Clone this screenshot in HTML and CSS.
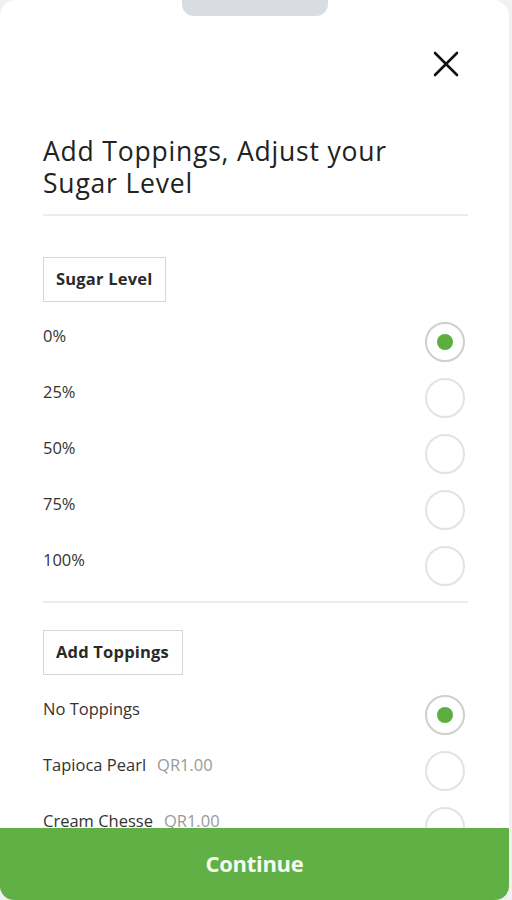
FILE: index.html
```html
<!DOCTYPE html>
<html>
<head>
<meta charset="utf-8">
<link rel="stylesheet" href="styles.css">
</head>
<body>
<div class="sheet">
  <div class="handle"></div>
  <div class="content">
    <div class="close-row">
      <svg class="close" width="26" height="26" viewBox="0 0 26 26"><path d="M2 2 L24 24 M24 2 L2 24" stroke="#111" stroke-width="2.6" stroke-linecap="round"/></svg>
    </div>
    <h1 class="title">Add Toppings, Adjust your Sugar Level</h1>
    <div class="divider first"></div>
    <div class="section sugar">
      <div class="tag">Sugar Level</div>
      <div class="rows">
        <div class="row"><span class="label">0%</span><span class="radio checked"></span></div>
        <div class="row"><span class="label">25%</span><span class="radio"></span></div>
        <div class="row"><span class="label">50%</span><span class="radio"></span></div>
        <div class="row"><span class="label">75%</span><span class="radio"></span></div>
        <div class="row"><span class="label">100%</span><span class="radio"></span></div>
      </div>
    </div>
    <div class="divider second"></div>
    <div class="section toppings">
      <div class="tag">Add Toppings</div>
      <div class="rows">
        <div class="row"><span class="label">No Toppings</span><span class="radio checked"></span></div>
        <div class="row"><span class="label">Tapioca Pearl<span class="price">QR1.00</span></span><span class="radio"></span></div>
        <div class="row"><span class="label">Cream Chesse<span class="price">QR1.00</span></span><span class="radio"></span></div>
      </div>
    </div>
  </div>
  <button class="continue">Continue</button>
</div>
</body>
</html>
```
FILE: styles.css
```css
html, body {
  margin: 0;
  padding: 0;
  background: #f1f1f1;
  font-family: "Open Sans", "Noto Sans", sans-serif;
  color: #222;
}
.sheet {
  width: 509px;
  height: 900px;
  background: #fff;
  border-radius: 16px 16px 14px 14px;
  overflow: hidden;
  display: flex;
  flex-direction: column;
}
.handle {
  width: 146px;
  height: 16px;
  margin: 0 auto;
  background: #d9dce1;
  border-radius: 0 0 12px 12px;
  flex: none;
}
.content {
  flex: 1;
  overflow: hidden;
  padding: 0 41px 0 43px;
}
.close-row {
  display: flex;
  justify-content: flex-end;
  padding-top: 35px;
  padding-right: 9px;
}
.close {
  display: block;
}
.title {
  margin: 58px 0 0;
  font-size: 26.5px;
  line-height: 32px;
  font-weight: 400;
  color: #222;
  width: 400px;
  letter-spacing: 0.8px;
}
.divider {
  height: 2px;
  background: #ececec;
}
.divider.first {
  margin-top: 15px;
}
.divider.second {
  margin-top: 7px;
}
.section.sugar {
  padding-top: 41px;
}
.section.toppings {
  padding-top: 27px;
}
.tag {
  display: inline-block;
  border: 1px solid #d6d6d6;
  padding: 11px 13px 12px 12px;
  font-size: 16.5px;
  font-weight: 700;
  line-height: 20px;
  letter-spacing: 0.2px;
  color: #2a2a2a;
}
.rows {
  margin-top: 12px;
}
.row {
  display: flex;
  justify-content: space-between;
  align-items: center;
  height: 56px;
}
.label {
  font-size: 16.5px;
  color: #333;
  margin-top: -13px;
}
.price {
  color: #9a9a9a;
  margin-left: 11px;
}
.radio {
  width: 36px;
  height: 36px;
  border: 2px solid #e3e3e3;
  border-radius: 50%;
  display: flex;
  align-items: center;
  justify-content: center;
  margin-right: 3px;
}
.radio.checked {
  border-color: #cfcfcf;
}
.radio.checked::after {
  content: "";
  width: 16px;
  height: 16px;
  border-radius: 50%;
  background: #5cae3f;
}
.continue {
  flex: none;
  height: 72px;
  width: 100%;
  border: none;
  background: #61b046;
  color: #f4fbef;
  font-family: "Open Sans", "Noto Sans", sans-serif;
  font-size: 22px;
  font-weight: 700;
  letter-spacing: -0.3px;
  padding: 0 0 2px;
}
```
